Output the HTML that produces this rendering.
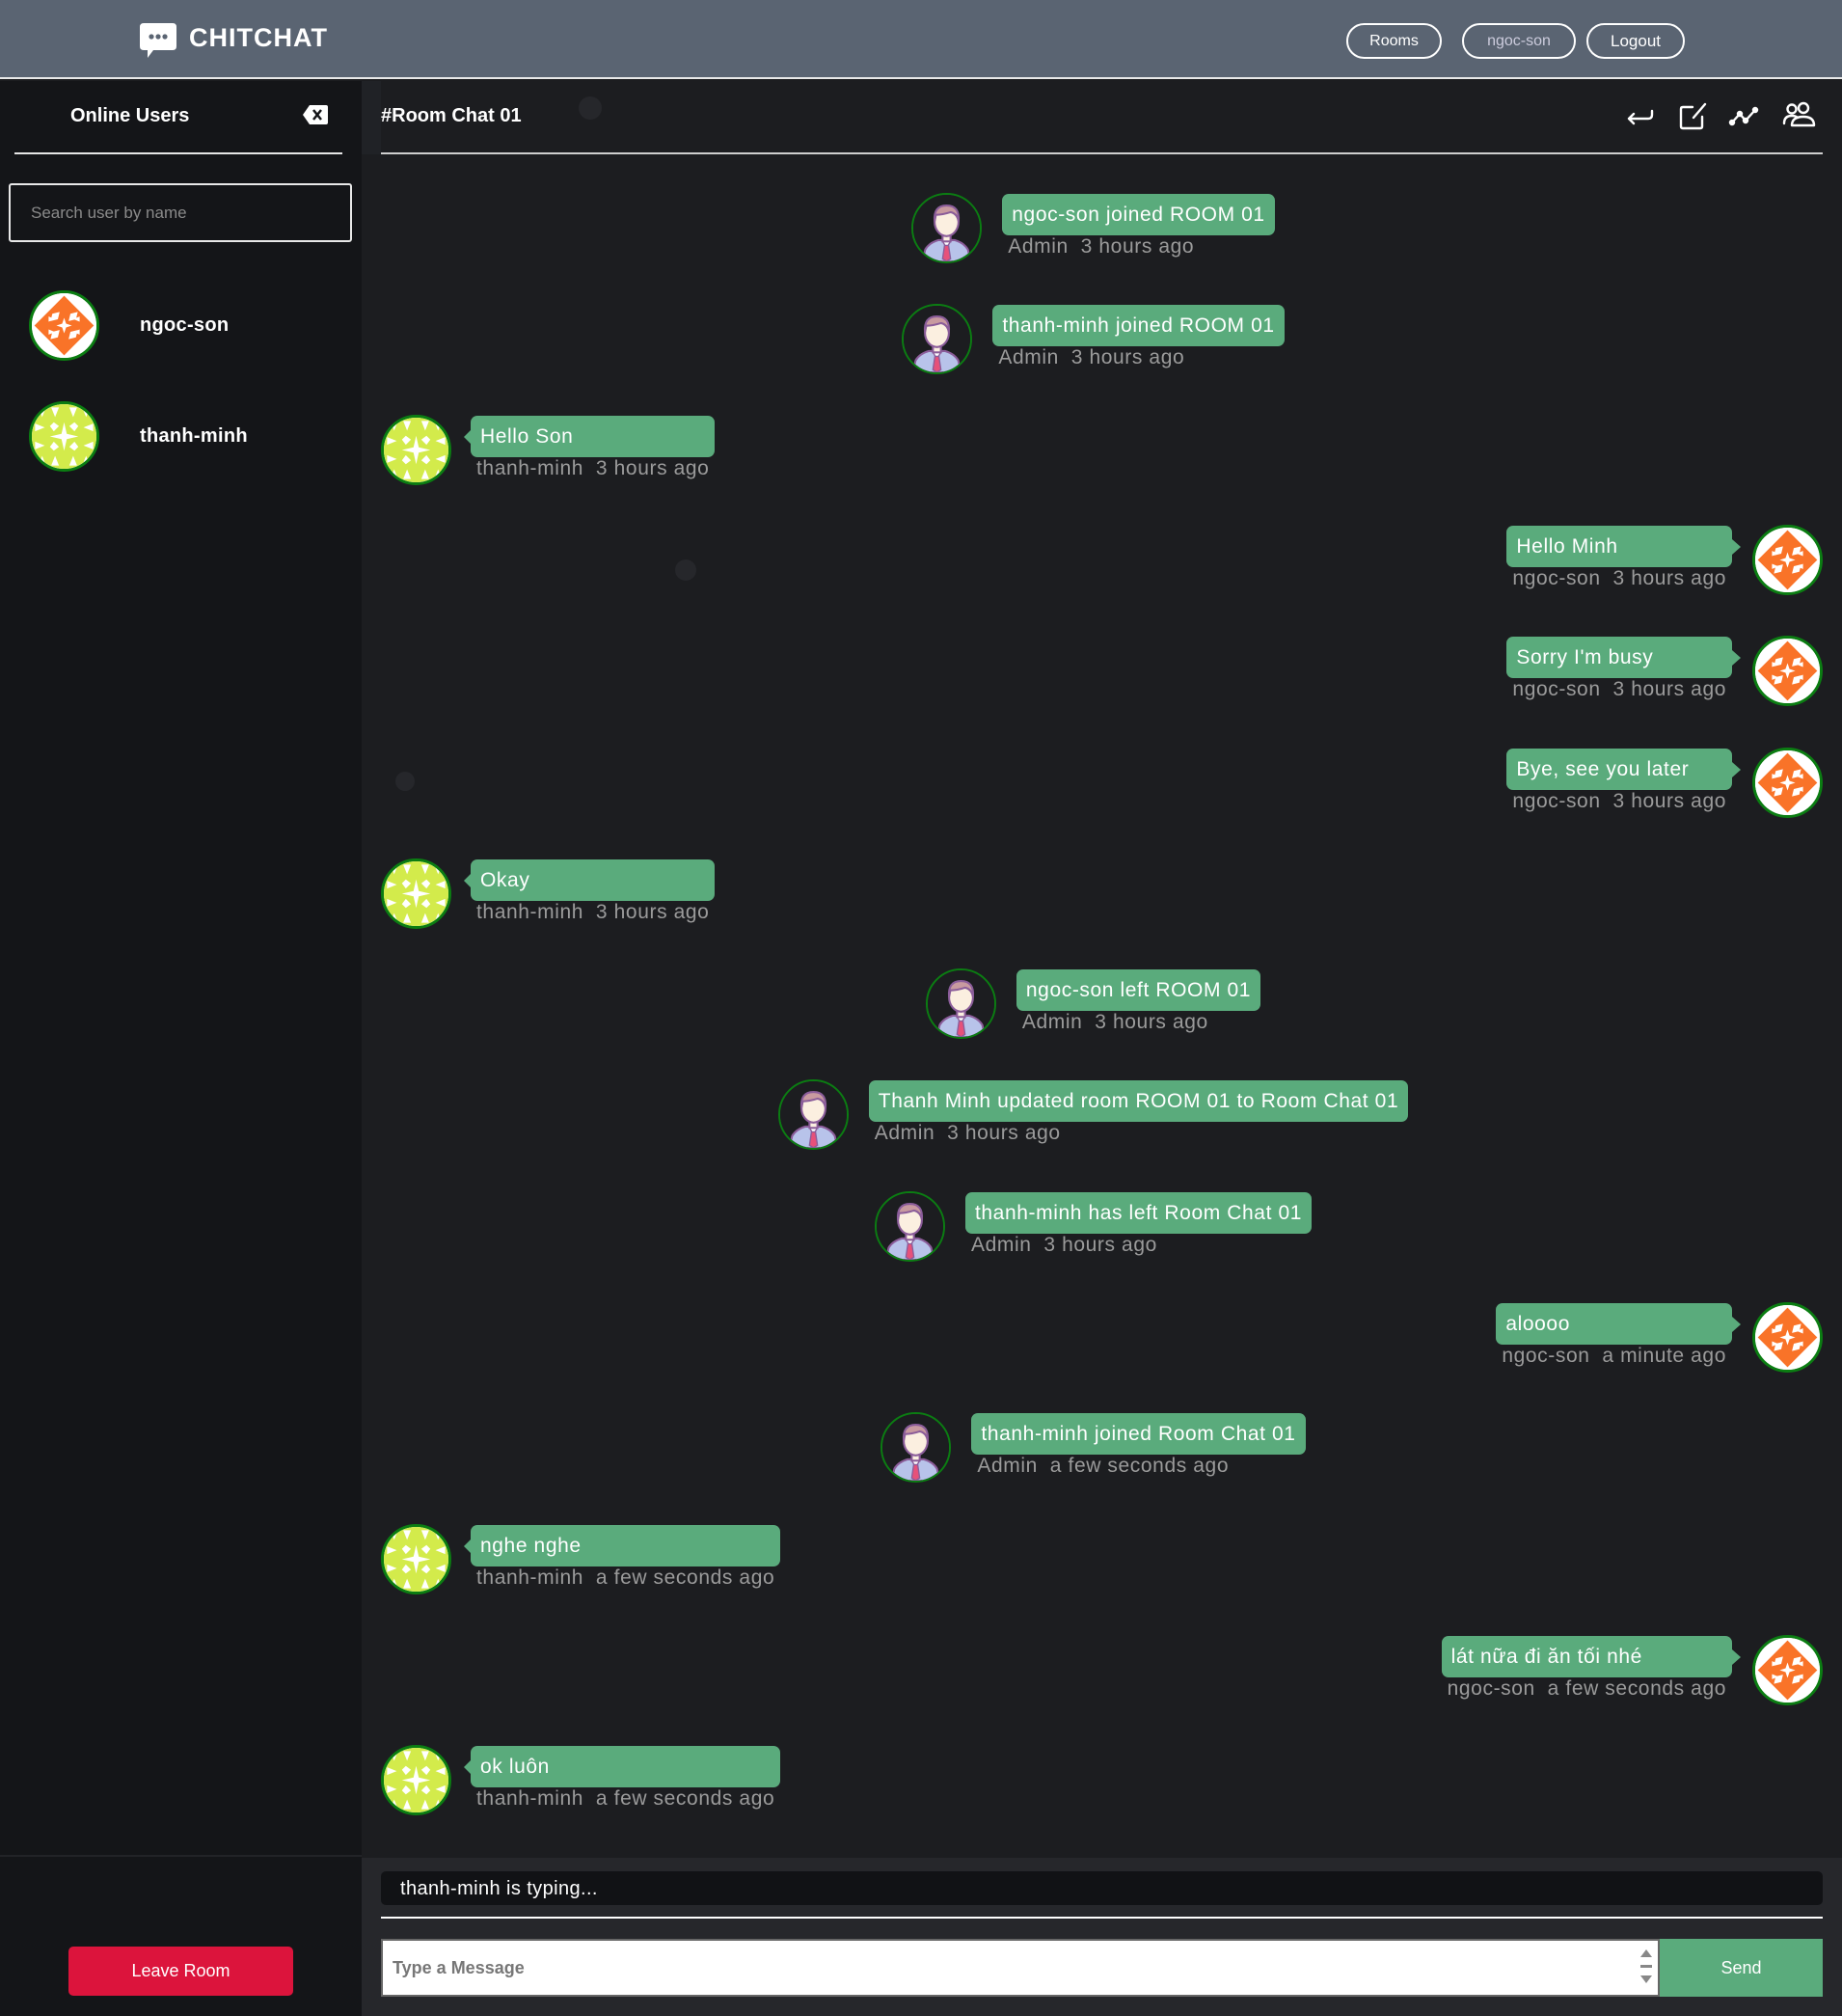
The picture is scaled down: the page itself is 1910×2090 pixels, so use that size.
<!DOCTYPE html>
<html><head><meta charset="utf-8">
<style>
*{box-sizing:border-box;margin:0;padding:0}
body{width:1910px;height:2090px;background:#1c1d20;font-family:"Liberation Sans","Noto Sans CJK SC",sans-serif;position:relative;overflow:hidden;color:#fff}
.hdr{position:absolute;left:0;top:0;width:1910px;height:82px;background:#5a6472;border-bottom:2px solid #e8e8e8}
.logo{position:absolute;left:145px;top:24px}
.brand{position:absolute;left:196px;top:24px;font-size:27px;font-weight:bold;letter-spacing:1px;color:#fff}
.nb{position:absolute;top:24px;height:37px;border:2px solid #fff;border-radius:19px;font-size:16px;line-height:33px;text-align:center;color:#fff}
.side{position:absolute;left:0;top:84px;width:375px;height:2006px;background:#141518}
.strip{position:absolute;left:375px;top:84px;width:20px;height:76px;background:#202226}
.t1{position:absolute;font-size:20px;font-weight:bold;color:#fff}
.line{position:absolute;height:2px;background:#e6e6e6}
.search{position:absolute;left:9px;top:190px;width:356px;height:61px;border:2px solid #e8e8e8;border-radius:3px;color:#8a8a8a;font-size:17px;padding:19px 0 0 21px}
.av{position:absolute;width:73px;height:73px;border-radius:50%;border:3px solid #0b7d12;overflow:hidden;background:#fff}
.av svg{width:100%;height:100%;display:block}
.uname{position:absolute;left:145px;font-size:20px;font-weight:bold;letter-spacing:0.3px}
.leave{position:absolute;left:71px;top:2018px;width:233px;height:51px;background:#dc143c;border-radius:5px;font-size:18px;text-align:center;line-height:51px}
.bot{position:absolute;left:375px;top:1926px;width:1535px;height:164px;background:#26272b}
.typing{position:absolute;left:395px;top:1940px;width:1495px;height:35px;background:#111215;border-radius:5px;font-size:20px;padding:7px 0 0 20px;letter-spacing:0.4px}
.inp{position:absolute;left:395px;top:2010px;width:1326px;height:60px;background:#fff;border:2px solid #666;color:#777;font-size:18px;font-weight:bold;padding:18px 0 0 10px}
.send{position:absolute;left:1721px;top:2010px;width:169px;height:60px;background:#5aab7c;font-size:18px;text-align:center;line-height:60px}
.row{position:absolute;left:395px;width:1495px;display:flex;align-items:flex-start}
.row.c{justify-content:center;padding-right:18px}
.row.r{justify-content:flex-end}
.row .a{width:73px;height:73px;border-radius:50%;border:3px solid #0b7d12;overflow:hidden;flex:none;margin-top:-1px;background:#fff}
.row .a svg{width:100%;height:100%;display:block}
.row.c .a{background:#1c1d20;border-width:2px}
.m{display:inline-flex;flex-direction:column;position:relative}
.row.l .m{margin-left:20px}
.row.c .m{margin-left:21px}
.row.r .m{margin-right:21px;align-items:flex-end}
.b{background:#5aab7c;border-radius:7px;height:43px;font-size:21px;letter-spacing:0.6px;line-height:43px;padding:0 10px;white-space:nowrap;align-self:stretch;position:relative}
.meta{color:#9b9b9b;font-size:21px;letter-spacing:0.6px;line-height:24px;padding:0 6px;white-space:nowrap}
.row.l .b:before{content:"";position:absolute;left:-7px;top:15px;border:7px solid transparent;border-left:0;border-right-color:#5aab7c}
.row.r .b:after{content:"";position:absolute;right:-9px;top:14px;border:8px solid transparent;border-right:0;border-left:9px solid #5aab7c}
.dot{position:absolute;border-radius:50%;background:#26272b}
</style></head><body>
<svg width="0" height="0" style="position:absolute">
<defs>
<symbol id="org" viewBox="0 0 100 100">
<rect width="100" height="100" fill="#fff"/>
<polygon points="50,4 96,50 50,96 4,50" fill="#f97328"/>
<polygon points="0,0 22,0 0,22" fill="#f97328"/><polygon points="100,0 78,0 100,22" fill="#f97328"/>
<polygon points="0,100 22,100 0,78" fill="#f97328"/><polygon points="100,100 78,100 100,78" fill="#f97328"/>
<g fill="#fff">
<polygon points="36,26 42,36 36,46 30,36" transform="rotate(45 36 36)"/>
<polygon points="64,26 70,36 64,46 58,36" transform="rotate(45 64 36)"/>
<polygon points="36,54 42,64 36,74 30,64" transform="rotate(45 36 64)"/>
<polygon points="64,54 70,64 64,74 58,64" transform="rotate(45 64 64)"/>
<polygon points="50,38 54,50 50,62 46,50"/><polygon points="38,50 50,46 62,50 50,54"/>
<polygon points="26,36 36,40 26,44"/><polygon points="74,36 64,40 74,44"/>
<polygon points="26,56 36,60 26,64"/><polygon points="74,56 64,60 74,64"/>
</g>
</symbol>
<symbol id="grn" viewBox="0 0 100 100">
<rect width="100" height="100" fill="#d3eb4b"/>
<g fill="#fff">
<polygon points="10,5 22,5 16,20"/><polygon points="30,5 42,5 36,20"/><polygon points="58,5 70,5 64,20"/><polygon points="78,5 90,5 84,20"/>
<polygon points="10,95 22,95 16,80"/><polygon points="30,95 42,95 36,80"/><polygon points="58,95 70,95 64,80"/><polygon points="78,95 90,95 84,80"/>
<polygon points="5,30 5,42 20,36"/><polygon points="5,58 5,70 20,64"/><polygon points="95,30 95,42 80,36"/><polygon points="95,58 95,70 80,64"/>
<polygon points="50,28 55,50 50,72 45,50"/><polygon points="28,50 50,45 72,50 50,55"/>
<polygon points="34,28 42,34 34,42 28,34"/><polygon points="66,28 72,34 66,42 58,34"/>
<polygon points="34,58 42,66 34,72 28,66"/><polygon points="66,58 72,66 66,72 58,66"/>
</g>
</symbol>
<symbol id="adm" viewBox="0 0 100 100">
<rect width="100" height="100" fill="#1c1d20"/>
<path d="M14,100 L18,82 Q24,72 38,68 L62,68 Q76,72 82,82 L86,100 Z" fill="#b8c3ea" stroke="#8b5d9a" stroke-width="3"/>
<path d="M43,68 L50,80 L57,68 Z" fill="#fff" stroke="#8b5d9a" stroke-width="2"/>
<path d="M47,76 L53,76 L56,96 L50,100 L44,96 Z" fill="#e6517a" stroke="#8b5d9a" stroke-width="2"/>
<rect x="44" y="56" width="12" height="14" fill="#fbefe0" stroke="#8b5d9a" stroke-width="3"/>
<ellipse cx="50" cy="40" rx="18" ry="22" fill="#fbefe0" stroke="#8b5d9a" stroke-width="3"/>
<path d="M32,40 Q30,16 50,16 Q70,16 68,40 Q66,28 56,26 Q44,30 34,30 Z" fill="#c89aa0" stroke="#8b5d9a" stroke-width="3"/>
</symbol>
</defs></svg>

<div class="hdr">
<svg class="logo" width="38" height="36" viewBox="0 0 38 36"><path d="M4,0 H34 Q38,0 38,4 V24 Q38,28 34,28 H14 L8,36 L8,28 H4 Q0,28 0,24 V4 Q0,0 4,0Z" fill="#fff"/><circle cx="12" cy="14" r="2.6" fill="#5a6472"/><circle cx="19" cy="14" r="2.6" fill="#5a6472"/><circle cx="26" cy="14" r="2.6" fill="#5a6472"/></svg>
<div class="brand">CHITCHAT</div>
<div class="nb" style="left:1396px;width:99px">Rooms</div>
<div class="nb" style="left:1516px;width:118px;color:#ccd">ngoc-son</div>
<div class="nb" style="left:1645px;width:102px;font-size:17px">Logout</div>
</div>

<div class="side"></div>
<div class="strip"></div>
<div class="t1" style="left:73px;top:109px">Online Users</div>
<svg style="position:absolute;left:314px;top:109px" width="26" height="20" viewBox="0 0 26 20"><path d="M7,0 H24 Q26,0 26,2 V18 Q26,20 24,20 H7 L0,10 Z" fill="#fff"/><path d="M11,5 L19,15 M19,5 L11,15" stroke="#141518" stroke-width="2.5"/></svg>
<div class="line" style="left:15px;top:158px;width:340px"></div>
<div class="search">Search user by name</div>
<div class="av" style="left:30px;top:301px"><svg><use href="#org"/></svg></div>
<div class="uname" style="top:326px">ngoc-son</div>
<div class="av" style="left:30px;top:416px"><svg><use href="#grn"/></svg></div>
<div class="uname" style="top:441px">thanh-minh</div>
<div class="line" style="left:0;top:1923px;width:375px;background:#222327"></div>
<div class="leave">Leave Room</div>

<div class="dot" style="left:600px;top:100px;width:24px;height:24px"></div>
<div class="dot" style="left:700px;top:580px;width:22px;height:22px"></div>
<div class="dot" style="left:410px;top:800px;width:20px;height:20px"></div>

<div class="t1" style="left:395px;top:109px">#Room Chat 01</div>
<div class="line" style="left:395px;top:158px;width:1495px;background:#cfcfcf"></div>
<svg style="position:absolute;left:1686px;top:105px" width="200" height="30" viewBox="0 0 200 30" fill="none" stroke="#fff" stroke-width="2.4" stroke-linecap="round" stroke-linejoin="round">
<path d="M27,10 V14 Q27,18 23,18 H3 M8,13 L3,18 L8,23"/>
<path d="M69,6 H59 Q57,6 57,8 V26 Q57,28 59,28 H77 Q79,28 79,26 V16 M70,17 L82,3"/>
<path d="M110,22 L118,13 L124,20 L134,9"/><circle cx="110" cy="22" r="2" fill="#fff"/><circle cx="118" cy="13" r="2" fill="#fff"/><circle cx="124" cy="20" r="2" fill="#fff"/><circle cx="134" cy="9" r="2" fill="#fff"/>
<circle cx="172" cy="8" r="4.5"/><circle cx="184" cy="7" r="5"/><path d="M164,23 Q164,15 172,15 Q176,15 178,17 M172,25 Q172,16 184,16 Q195,16 195,25 Z"/>
</svg>

<div class="row c" style="top:201px"><div class="a"><svg><use href="#adm"/></svg></div><div class="m"><div class="b">ngoc-son joined ROOM 01</div><div class="meta">Admin&nbsp; 3 hours ago</div></div></div>
<div class="row c" style="top:316px"><div class="a"><svg><use href="#adm"/></svg></div><div class="m"><div class="b">thanh-minh joined ROOM 01</div><div class="meta">Admin&nbsp; 3 hours ago</div></div></div>
<div class="row l" style="top:431px"><div class="a"><svg><use href="#grn"/></svg></div><div class="m"><div class="b">Hello Son</div><div class="meta">thanh-minh&nbsp; 3 hours ago</div></div></div>
<div class="row r" style="top:545px"><div class="m"><div class="b">Hello Minh</div><div class="meta">ngoc-son&nbsp; 3 hours ago</div></div><div class="a"><svg><use href="#org"/></svg></div></div>
<div class="row r" style="top:660px"><div class="m"><div class="b">Sorry I'm busy</div><div class="meta">ngoc-son&nbsp; 3 hours ago</div></div><div class="a"><svg><use href="#org"/></svg></div></div>
<div class="row r" style="top:776px"><div class="m"><div class="b">Bye, see you later</div><div class="meta">ngoc-son&nbsp; 3 hours ago</div></div><div class="a"><svg><use href="#org"/></svg></div></div>
<div class="row l" style="top:891px"><div class="a"><svg><use href="#grn"/></svg></div><div class="m"><div class="b">Okay</div><div class="meta">thanh-minh&nbsp; 3 hours ago</div></div></div>
<div class="row c" style="top:1005px"><div class="a"><svg><use href="#adm"/></svg></div><div class="m"><div class="b">ngoc-son left ROOM 01</div><div class="meta">Admin&nbsp; 3 hours ago</div></div></div>
<div class="row c" style="top:1120px"><div class="a"><svg><use href="#adm"/></svg></div><div class="m"><div class="b">Thanh Minh updated room ROOM 01 to Room Chat 01</div><div class="meta">Admin&nbsp; 3 hours ago</div></div></div>
<div class="row c" style="top:1236px"><div class="a"><svg><use href="#adm"/></svg></div><div class="m"><div class="b">thanh-minh has left Room Chat 01</div><div class="meta">Admin&nbsp; 3 hours ago</div></div></div>
<div class="row r" style="top:1351px"><div class="m"><div class="b">aloooo</div><div class="meta">ngoc-son&nbsp; a minute ago</div></div><div class="a"><svg><use href="#org"/></svg></div></div>
<div class="row c" style="top:1465px"><div class="a"><svg><use href="#adm"/></svg></div><div class="m"><div class="b">thanh-minh joined Room Chat 01</div><div class="meta">Admin&nbsp; a few seconds ago</div></div></div>
<div class="row l" style="top:1581px"><div class="a"><svg><use href="#grn"/></svg></div><div class="m"><div class="b">nghe nghe</div><div class="meta">thanh-minh&nbsp; a few seconds ago</div></div></div>
<div class="row r" style="top:1696px"><div class="m"><div class="b">lát nữa đi ăn tối nhé</div><div class="meta">ngoc-son&nbsp; a few seconds ago</div></div><div class="a"><svg><use href="#org"/></svg></div></div>
<div class="row l" style="top:1810px"><div class="a"><svg><use href="#grn"/></svg></div><div class="m"><div class="b">ok luôn</div><div class="meta">thanh-minh&nbsp; a few seconds ago</div></div></div>

<div class="bot"></div>
<div class="typing">thanh-minh is typing...</div>
<div class="line" style="left:395px;top:1987px;width:1495px;background:#fff"></div>
<div class="inp">Type a Message</div>
<svg style="position:absolute;left:1700px;top:2018px" width="14" height="44" viewBox="0 0 14 44" fill="#888"><polygon points="7,3 13,11 1,11"/><rect x="1" y="19" width="12" height="3"/><polygon points="1,30 13,30 7,38"/></svg>
<div class="send">Send</div>
</body></html>
